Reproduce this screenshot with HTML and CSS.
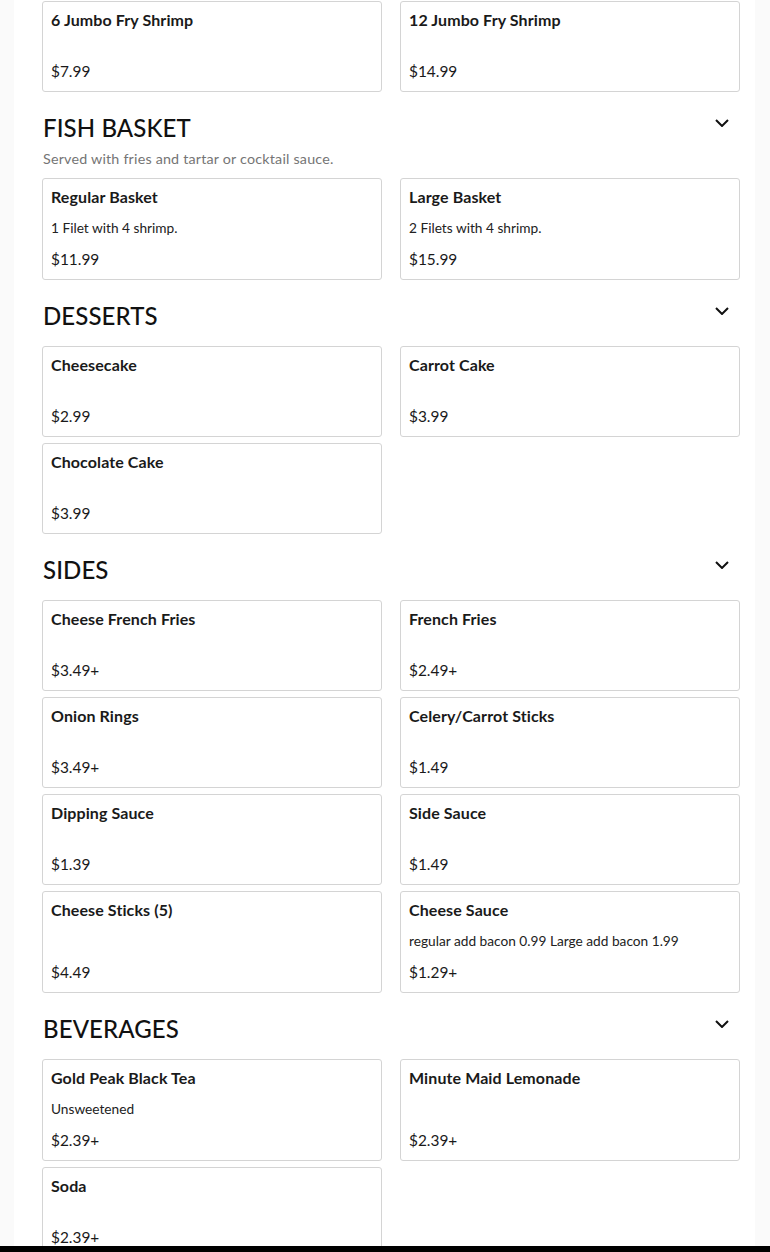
FILE: index.html
```html
<!DOCTYPE html>
<html lang="en">
<head>
<meta charset="utf-8">
<title>Menu</title>
<link rel="stylesheet" href="styles.css">
</head>
<body>
<main class="page">
  <section class="section first">
    <div class="grid">
      <div class="card"><div class="name">6 Jumbo Fry Shrimp</div><div class="spacer"></div><div class="price">$7.99</div></div>
      <div class="card"><div class="name">12 Jumbo Fry Shrimp</div><div class="spacer"></div><div class="price">$14.99</div></div>
    </div>
  </section>

  <section class="section">
    <div class="head">
      <h2 class="title">FISH BASKET</h2>
      <svg class="chev" viewBox="0 0 14 8" width="14" height="8"><path d="M1 1 L7 7 L13 1" fill="none" stroke="#111" stroke-width="2"/></svg>
    </div>
    <p class="sub">Served with fries and tartar or cocktail sauce.</p>
    <div class="grid">
      <div class="card"><div class="name">Regular Basket</div><div class="desc">1 Filet with 4 shrimp.</div><div class="price">$11.99</div></div>
      <div class="card"><div class="name">Large Basket</div><div class="desc">2 Filets with 4 shrimp.</div><div class="price">$15.99</div></div>
    </div>
  </section>

  <section class="section">
    <div class="head">
      <h2 class="title">DESSERTS</h2>
      <svg class="chev" viewBox="0 0 14 8" width="14" height="8"><path d="M1 1 L7 7 L13 1" fill="none" stroke="#111" stroke-width="2"/></svg>
    </div>
    <div class="grid">
      <div class="card"><div class="name">Cheesecake</div><div class="spacer"></div><div class="price">$2.99</div></div>
      <div class="card"><div class="name">Carrot Cake</div><div class="spacer"></div><div class="price">$3.99</div></div>
      <div class="card"><div class="name">Chocolate Cake</div><div class="spacer"></div><div class="price">$3.99</div></div>
    </div>
  </section>

  <section class="section">
    <div class="head">
      <h2 class="title">SIDES</h2>
      <svg class="chev" viewBox="0 0 14 8" width="14" height="8"><path d="M1 1 L7 7 L13 1" fill="none" stroke="#111" stroke-width="2"/></svg>
    </div>
    <div class="grid">
      <div class="card"><div class="name">Cheese French Fries</div><div class="spacer"></div><div class="price">$3.49+</div></div>
      <div class="card"><div class="name">French Fries</div><div class="spacer"></div><div class="price">$2.49+</div></div>
      <div class="card"><div class="name">Onion Rings</div><div class="spacer"></div><div class="price">$3.49+</div></div>
      <div class="card"><div class="name">Celery/Carrot Sticks</div><div class="spacer"></div><div class="price">$1.49</div></div>
      <div class="card"><div class="name">Dipping Sauce</div><div class="spacer"></div><div class="price">$1.39</div></div>
      <div class="card"><div class="name">Side Sauce</div><div class="spacer"></div><div class="price">$1.49</div></div>
      <div class="card"><div class="name">Cheese Sticks (5)</div><div class="spacer"></div><div class="price">$4.49</div></div>
      <div class="card"><div class="name">Cheese Sauce</div><div class="desc">regular add bacon 0.99 Large add bacon 1.99</div><div class="price">$1.29+</div></div>
    </div>
  </section>

  <section class="section">
    <div class="head">
      <h2 class="title">BEVERAGES</h2>
      <svg class="chev" viewBox="0 0 14 8" width="14" height="8"><path d="M1 1 L7 7 L13 1" fill="none" stroke="#111" stroke-width="2"/></svg>
    </div>
    <div class="grid">
      <div class="card"><div class="name">Gold Peak Black Tea</div><div class="desc">Unsweetened</div><div class="price">$2.39+</div></div>
      <div class="card"><div class="name">Minute Maid Lemonade</div><div class="spacer"></div><div class="price">$2.39+</div></div>
      <div class="card"><div class="name">Soda</div><div class="spacer"></div><div class="price">$2.39+</div></div>
    </div>
  </section>
</main>
<div class="bottom-bar"></div>
</body>
</html>
```

FILE: styles.css
```css
html, body {
  margin: 0;
  padding: 0;
}
body {
  background: #fafafa;
  font-family: Lato, "Noto Sans", sans-serif;
  color: #111;
}
.page {
  margin-left: 14px;
  width: 741px;
  background: #fff;
  padding: 1px 15px 40px 28px;
  box-sizing: border-box;
  min-height: 1300px;
}
.section {
  padding-top: 16px;
}
.section.first {
  padding-top: 0;
}
.head {
  display: flex;
  justify-content: space-between;
  align-items: flex-start;
  height: 40px;
}
.title {
  margin: 0 0 0 1px;
  font-size: 24px;
  font-weight: 500;
  line-height: 40px;
  color: #111;
  letter-spacing: 0.1px;
}
.chev {
  margin-top: 11px;
  margin-right: 11px;
}
.sub {
  margin: 2px 0 0 1px;
  font-size: 14.3px;
  line-height: 18px;
  color: #757575;
  letter-spacing: 0.2px;
}
.grid {
  margin-top: 10px;
  display: grid;
  grid-template-columns: 340px 340px;
  column-gap: 18px;
  row-gap: 6px;
}
.section.first .grid {
  margin-top: 0;
}
.card {
  border: 1px solid #d4d4d4;
  border-radius: 3px;
  padding: 6px 8px 8px;
  display: flex;
  flex-direction: column;
  background: #fff;
}
.name {
  font-size: 16px;
  font-weight: 700;
  line-height: 24px;
  color: #1a1a1a;
  letter-spacing: 0.1px;
}
.spacer {
  flex: 1 0 27px;
}
.desc {
  margin: 9px 0 9px;
  font-size: 13.7px;
  line-height: 20px;
  color: #222;
}
.price {
  font-size: 15.4px;
  line-height: 24px;
  color: #1a1a1a;
}
.bottom-bar {
  position: fixed;
  left: 0;
  right: 0;
  bottom: 0;
  height: 6px;
  background: #000;
}
```
